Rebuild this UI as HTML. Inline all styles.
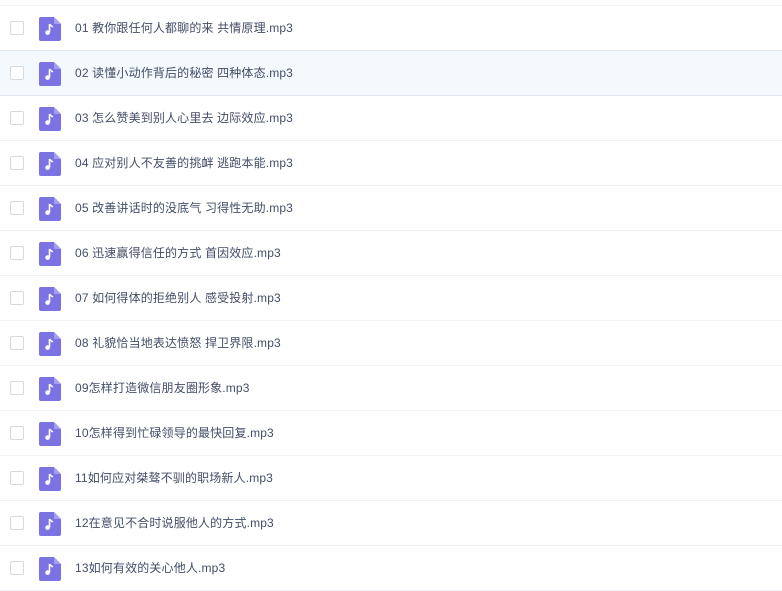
<!DOCTYPE html>
<html><head><meta charset="utf-8"><style>
body{margin:0;width:782px;height:590px;overflow:hidden;background:#fff;font-family:"Liberation Sans","Noto Sans CJK SC",sans-serif;}
.list{position:absolute;top:5px;left:0;width:782px;border-top:1px solid #f0f2f5;}
.row{position:relative;height:44px;border-bottom:1px solid #f0f2f5;}
.row.hl{background:#f4f9fd;border-bottom-color:#dfeaf5;}
.hlt{border-top:1px solid #dfeaf5;margin-top:-1px}
.cb{position:absolute;left:10px;top:15px;width:12px;height:12px;border:1px solid #d5d9e0;border-radius:2px;background:#fff;}
.ic{position:absolute;left:39px;top:11px;}
.t{position:absolute;left:75px;top:0;line-height:45px;font-size:12px;letter-spacing:0.15px;color:#424e67;}
</style></head><body>
<div class="list">
<div class="row"><div class="cb"></div><svg class="ic" width="22" height="24" viewBox="0 0 22 24"><path d="M2 0H15L22 7V22a2 2 0 0 1-2 2H2a2 2 0 0 1-2-2V2a2 2 0 0 1 2-2z" fill="#7b73e3"/><path d="M15 0V7H22z" fill="#a49ef0"/><path d="M10.5 7v8.2" stroke="#fff" stroke-width="1.6"/><circle cx="8.6" cy="15.6" r="2.3" fill="#fff"/><path d="M10.5 7c1 1.6 2.6 2 3.2 3.2" stroke="#fff" stroke-width="1.5" fill="none"/></svg><div class="t">01 教你跟任何人都聊的来 共情原理.mp3</div></div>
<div class="row hl hlt"><div class="cb"></div><svg class="ic" width="22" height="24" viewBox="0 0 22 24"><path d="M2 0H15L22 7V22a2 2 0 0 1-2 2H2a2 2 0 0 1-2-2V2a2 2 0 0 1 2-2z" fill="#7b73e3"/><path d="M15 0V7H22z" fill="#a49ef0"/><path d="M10.5 7v8.2" stroke="#fff" stroke-width="1.6"/><circle cx="8.6" cy="15.6" r="2.3" fill="#fff"/><path d="M10.5 7c1 1.6 2.6 2 3.2 3.2" stroke="#fff" stroke-width="1.5" fill="none"/></svg><div class="t">02 读懂小动作背后的秘密 四种体态.mp3</div></div>
<div class="row"><div class="cb"></div><svg class="ic" width="22" height="24" viewBox="0 0 22 24"><path d="M2 0H15L22 7V22a2 2 0 0 1-2 2H2a2 2 0 0 1-2-2V2a2 2 0 0 1 2-2z" fill="#7b73e3"/><path d="M15 0V7H22z" fill="#a49ef0"/><path d="M10.5 7v8.2" stroke="#fff" stroke-width="1.6"/><circle cx="8.6" cy="15.6" r="2.3" fill="#fff"/><path d="M10.5 7c1 1.6 2.6 2 3.2 3.2" stroke="#fff" stroke-width="1.5" fill="none"/></svg><div class="t">03 怎么赞美到别人心里去 边际效应.mp3</div></div>
<div class="row"><div class="cb"></div><svg class="ic" width="22" height="24" viewBox="0 0 22 24"><path d="M2 0H15L22 7V22a2 2 0 0 1-2 2H2a2 2 0 0 1-2-2V2a2 2 0 0 1 2-2z" fill="#7b73e3"/><path d="M15 0V7H22z" fill="#a49ef0"/><path d="M10.5 7v8.2" stroke="#fff" stroke-width="1.6"/><circle cx="8.6" cy="15.6" r="2.3" fill="#fff"/><path d="M10.5 7c1 1.6 2.6 2 3.2 3.2" stroke="#fff" stroke-width="1.5" fill="none"/></svg><div class="t">04 应对别人不友善的挑衅 逃跑本能.mp3</div></div>
<div class="row"><div class="cb"></div><svg class="ic" width="22" height="24" viewBox="0 0 22 24"><path d="M2 0H15L22 7V22a2 2 0 0 1-2 2H2a2 2 0 0 1-2-2V2a2 2 0 0 1 2-2z" fill="#7b73e3"/><path d="M15 0V7H22z" fill="#a49ef0"/><path d="M10.5 7v8.2" stroke="#fff" stroke-width="1.6"/><circle cx="8.6" cy="15.6" r="2.3" fill="#fff"/><path d="M10.5 7c1 1.6 2.6 2 3.2 3.2" stroke="#fff" stroke-width="1.5" fill="none"/></svg><div class="t">05 改善讲话时的没底气 习得性无助.mp3</div></div>
<div class="row"><div class="cb"></div><svg class="ic" width="22" height="24" viewBox="0 0 22 24"><path d="M2 0H15L22 7V22a2 2 0 0 1-2 2H2a2 2 0 0 1-2-2V2a2 2 0 0 1 2-2z" fill="#7b73e3"/><path d="M15 0V7H22z" fill="#a49ef0"/><path d="M10.5 7v8.2" stroke="#fff" stroke-width="1.6"/><circle cx="8.6" cy="15.6" r="2.3" fill="#fff"/><path d="M10.5 7c1 1.6 2.6 2 3.2 3.2" stroke="#fff" stroke-width="1.5" fill="none"/></svg><div class="t">06 迅速赢得信任的方式 首因效应.mp3</div></div>
<div class="row"><div class="cb"></div><svg class="ic" width="22" height="24" viewBox="0 0 22 24"><path d="M2 0H15L22 7V22a2 2 0 0 1-2 2H2a2 2 0 0 1-2-2V2a2 2 0 0 1 2-2z" fill="#7b73e3"/><path d="M15 0V7H22z" fill="#a49ef0"/><path d="M10.5 7v8.2" stroke="#fff" stroke-width="1.6"/><circle cx="8.6" cy="15.6" r="2.3" fill="#fff"/><path d="M10.5 7c1 1.6 2.6 2 3.2 3.2" stroke="#fff" stroke-width="1.5" fill="none"/></svg><div class="t">07 如何得体的拒绝别人 感受投射.mp3</div></div>
<div class="row"><div class="cb"></div><svg class="ic" width="22" height="24" viewBox="0 0 22 24"><path d="M2 0H15L22 7V22a2 2 0 0 1-2 2H2a2 2 0 0 1-2-2V2a2 2 0 0 1 2-2z" fill="#7b73e3"/><path d="M15 0V7H22z" fill="#a49ef0"/><path d="M10.5 7v8.2" stroke="#fff" stroke-width="1.6"/><circle cx="8.6" cy="15.6" r="2.3" fill="#fff"/><path d="M10.5 7c1 1.6 2.6 2 3.2 3.2" stroke="#fff" stroke-width="1.5" fill="none"/></svg><div class="t">08 礼貌恰当地表达愤怒 捍卫界限.mp3</div></div>
<div class="row"><div class="cb"></div><svg class="ic" width="22" height="24" viewBox="0 0 22 24"><path d="M2 0H15L22 7V22a2 2 0 0 1-2 2H2a2 2 0 0 1-2-2V2a2 2 0 0 1 2-2z" fill="#7b73e3"/><path d="M15 0V7H22z" fill="#a49ef0"/><path d="M10.5 7v8.2" stroke="#fff" stroke-width="1.6"/><circle cx="8.6" cy="15.6" r="2.3" fill="#fff"/><path d="M10.5 7c1 1.6 2.6 2 3.2 3.2" stroke="#fff" stroke-width="1.5" fill="none"/></svg><div class="t">09怎样打造微信朋友圈形象.mp3</div></div>
<div class="row"><div class="cb"></div><svg class="ic" width="22" height="24" viewBox="0 0 22 24"><path d="M2 0H15L22 7V22a2 2 0 0 1-2 2H2a2 2 0 0 1-2-2V2a2 2 0 0 1 2-2z" fill="#7b73e3"/><path d="M15 0V7H22z" fill="#a49ef0"/><path d="M10.5 7v8.2" stroke="#fff" stroke-width="1.6"/><circle cx="8.6" cy="15.6" r="2.3" fill="#fff"/><path d="M10.5 7c1 1.6 2.6 2 3.2 3.2" stroke="#fff" stroke-width="1.5" fill="none"/></svg><div class="t">10怎样得到忙碌领导的最快回复.mp3</div></div>
<div class="row"><div class="cb"></div><svg class="ic" width="22" height="24" viewBox="0 0 22 24"><path d="M2 0H15L22 7V22a2 2 0 0 1-2 2H2a2 2 0 0 1-2-2V2a2 2 0 0 1 2-2z" fill="#7b73e3"/><path d="M15 0V7H22z" fill="#a49ef0"/><path d="M10.5 7v8.2" stroke="#fff" stroke-width="1.6"/><circle cx="8.6" cy="15.6" r="2.3" fill="#fff"/><path d="M10.5 7c1 1.6 2.6 2 3.2 3.2" stroke="#fff" stroke-width="1.5" fill="none"/></svg><div class="t">11如何应对桀骜不驯的职场新人.mp3</div></div>
<div class="row"><div class="cb"></div><svg class="ic" width="22" height="24" viewBox="0 0 22 24"><path d="M2 0H15L22 7V22a2 2 0 0 1-2 2H2a2 2 0 0 1-2-2V2a2 2 0 0 1 2-2z" fill="#7b73e3"/><path d="M15 0V7H22z" fill="#a49ef0"/><path d="M10.5 7v8.2" stroke="#fff" stroke-width="1.6"/><circle cx="8.6" cy="15.6" r="2.3" fill="#fff"/><path d="M10.5 7c1 1.6 2.6 2 3.2 3.2" stroke="#fff" stroke-width="1.5" fill="none"/></svg><div class="t">12在意见不合时说服他人的方式.mp3</div></div>
<div class="row"><div class="cb"></div><svg class="ic" width="22" height="24" viewBox="0 0 22 24"><path d="M2 0H15L22 7V22a2 2 0 0 1-2 2H2a2 2 0 0 1-2-2V2a2 2 0 0 1 2-2z" fill="#7b73e3"/><path d="M15 0V7H22z" fill="#a49ef0"/><path d="M10.5 7v8.2" stroke="#fff" stroke-width="1.6"/><circle cx="8.6" cy="15.6" r="2.3" fill="#fff"/><path d="M10.5 7c1 1.6 2.6 2 3.2 3.2" stroke="#fff" stroke-width="1.5" fill="none"/></svg><div class="t">13如何有效的关心他人.mp3</div></div>
</div>
</body></html>
